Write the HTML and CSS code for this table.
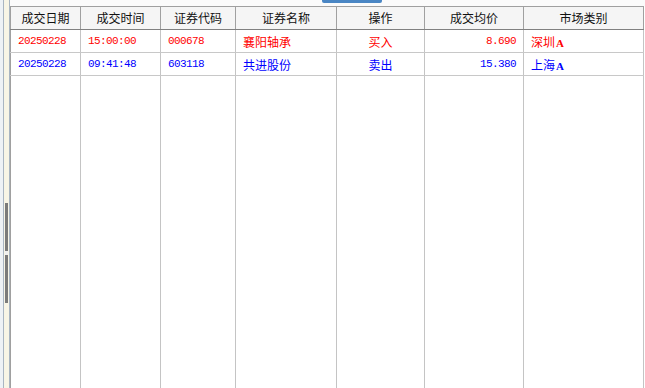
FILE: index.html
```html
<!DOCTYPE html>
<html lang="zh-CN">
<head>
<meta charset="utf-8">
<title>成交查询</title>
<link rel="stylesheet" href="styles.css">
</head>
<body>
<div class="page">
  <div class="gutter">
    <div class="rail">
      <div class="thumb"><span class="notch"></span></div>
    </div>
  </div>
  <div class="main">
    <div class="topbar"><span class="tab"></span></div>
    <table class="grid">
      <colgroup>
        <col style="width:70px"><col style="width:80px"><col style="width:75px"><col style="width:101px"><col style="width:88px"><col style="width:99px"><col style="width:120px">
      </colgroup>
      <thead>
        <tr>
          <th>成交日期</th><th>成交时间</th><th>证券代码</th><th>证券名称</th><th>操作</th><th>成交均价</th><th>市场类别</th>
        </tr>
      </thead>
      <tbody>
        <tr class="row red">
          <td class="num">20250228</td><td class="num">15:00:00</td><td class="num">000678</td><td class="cn">襄阳轴承</td><td class="cn center">买入</td><td class="num right">8.690</td><td class="cn">深圳<span class="mk">A</span></td>
        </tr>
        <tr class="row blue">
          <td class="num">20250228</td><td class="num">09:41:48</td><td class="num">603118</td><td class="cn">共进股份</td><td class="cn center">卖出</td><td class="num right">15.380</td><td class="cn">上海<span class="mk">A</span></td>
        </tr>
        <tr class="filler">
          <td></td><td></td><td></td><td></td><td></td><td></td><td></td>
        </tr>
      </tbody>
    </table>
  </div>
</div>
</body>
</html>
```
FILE: styles.css
```css
* { box-sizing: border-box; }
html, body { margin: 0; padding: 0; background: #ffffff; }
body { font-family: "Noto Sans CJK SC", "Liberation Sans", sans-serif; }

.page {
  display: flex;
  height: 388px;
  overflow: hidden;
}

.gutter {
  width: 10px;
  flex: 0 0 10px;
  background: #eef2f6;
  padding-left: 3px;
}
.rail {
  height: 100%;
  border-left: 1px solid #a9b5c2;
  border-right: 1px solid #a9b5c2;
  background: #f8f5e6;
  padding-top: 203px;
  padding-left: 1px;
  padding-right: 1px;
}
.thumb {
  position: relative;
  height: 100px;
  background: #7b7b7b;
}
.notch {
  position: absolute;
  left: 0;
  top: 48px;
  width: 3px;
  height: 4px;
  background: #f0f0f0;
}

.main {
  flex: 1;
  display: flex;
  flex-direction: column;
}
.topbar {
  height: 6px;
  flex: 0 0 6px;
  background: #fbfbfb;
  padding-left: 312px;
}
.tab {
  display: block;
  width: 60px;
  height: 3px;
  background: #4a86c4;
  border-radius: 0 0 2px 2px;
}

.grid {
  width: 634px;
  height: 382px;
  table-layout: fixed;
  border-collapse: collapse;
  border-top: 1px solid #a0a0a0;
  border-left: 1px solid #a0a0a0;
  border-right: 1px solid #b0b0b0;
}
.grid th {
  height: 23px;
  background: #f5f5f5;
  font-weight: normal;
  font-size: 12px;
  color: #111;
  border-right: 1px solid #a0a0a0;
  border-bottom: 1px solid #808080;
  text-align: center;
  padding: 0;
  line-height: 22px;
}
.grid td {
  border-right: 1px solid #c4c4c4;
  padding: 0 7px;
  white-space: nowrap;
}
.row td {
  height: 23px;
  border-bottom: 1px solid #c8c8c8;
}
.filler td { height: auto; }

.num {
  font-family: "Liberation Mono", "DejaVu Sans Mono", monospace;
  font-size: 11px;
  letter-spacing: -0.6px;
}
.cn { font-size: 12px; }
.center { text-align: center; }
.right { text-align: right; }

.red td { color: #ff0000; }
.blue td { color: #0000ff; }

.mk {
  font-family: "Liberation Serif", serif;
  font-weight: bold;
  font-size: 11px;
  margin-left: 1px;
}
```
